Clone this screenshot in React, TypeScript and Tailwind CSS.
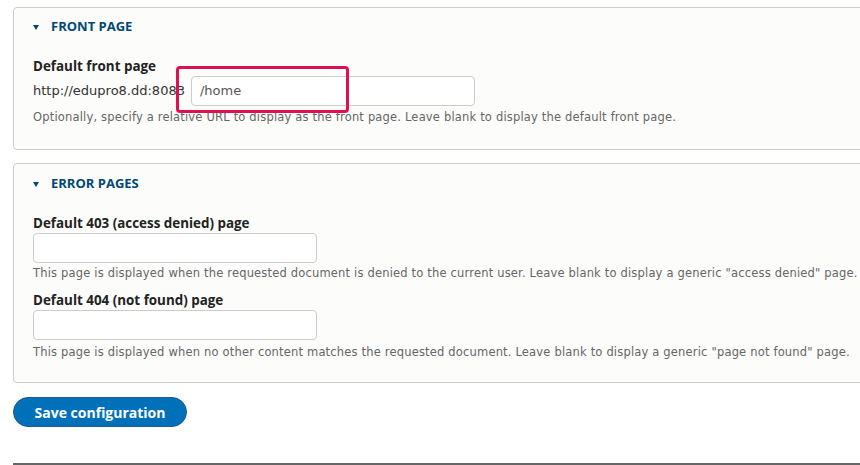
import React from "react";

const body = { fontFamily: '"DejaVu Sans", Verdana, sans-serif' };
const bold = { fontFamily: '"Open Sans", "Noto Sans", sans-serif' };

function Legend({ children }: { children: React.ReactNode }) {
  return (
    <div className="flex h-5 items-center pl-[19px]">
      <svg width="6" height="5" viewBox="0 0 6 5" className="mr-3" aria-hidden>
        <path d="M0 0h6L3 5z" fill="#004875" />
      </svg>
      <span className="text-[13px] font-bold uppercase text-[#004875]" style={bold}>
        {children}
      </span>
    </div>
  );
}

function Label({ children }: { children: React.ReactNode }) {
  return (
    <div className="h-[18px] text-[13.4px] font-bold leading-[18px] text-[#222]" style={bold}>
      {children}
    </div>
  );
}

function Description({ children }: { children: React.ReactNode }) {
  return (
    <div className="h-4 whitespace-nowrap text-[11.5px] leading-4 tracking-[0.18px] text-[#666]" style={body}>
      {children}
    </div>
  );
}

function TextInput({ value, className = "" }: { value?: string; className?: string }) {
  return (
    <div
      className={`flex h-[30px] w-[284px] items-center rounded-sm border border-[#ccc] bg-white px-2 text-[13px] text-[#555] ${className}`}
      style={body}
    >
      {value}
    </div>
  );
}

export default function App() {
  return (
    <div className="relative flex h-[465px] w-[860px] flex-col overflow-hidden bg-white pl-[13px] pt-[7px]">
      <section className="h-[143px] w-[900px] rounded-sm border border-[#ccc] bg-[#fcfcfa] pt-[9px]">
        <Legend>Front page</Legend>
        <div className="mt-5 pl-[19px]">
          <Label>Default front page</Label>
          <div className="mt-px flex items-center">
            <span className="text-[13px] text-[#333]" style={body}>
              http://edupro8.dd:8083
            </span>
            <TextInput value="/home" className="ml-[6px]" />
          </div>
          <div className="mt-[3px]">
            <Description>
              Optionally, specify a relative URL to display as the front page. Leave blank to display the default
              front page.
            </Description>
          </div>
        </div>
      </section>

      <section className="mt-[13px] h-[220px] w-[900px] rounded-sm border border-[#ccc] bg-[#fcfcfa] pt-[10px]">
        <Legend>Error pages</Legend>
        <div className="mt-5 pl-[19px]">
          <Label>Default 403 (access denied) page</Label>
          <TextInput className="mt-px" />
          <div className="mt-[2px]">
            <Description>
              This page is displayed when the requested document is denied to the current user. Leave blank to
              display a generic "access denied" page.
            </Description>
          </div>
          <div className="mt-[10px]">
            <Label>Default 404 (not found) page</Label>
          </div>
          <TextInput className="mt-px" />
          <div className="mt-[4px]">
            <Description>
              This page is displayed when no other content matches the requested document. Leave blank to display a
              generic "page not found" page.
            </Description>
          </div>
        </div>
      </section>

      <div className="mt-[14px]">
        <button
          className="flex h-[30px] w-[174px] items-center justify-center rounded-full border border-[#1e5c90] bg-[#0071b8] text-[14px] font-bold text-white"
          style={bold}
        >
          Save configuration
        </button>
      </div>

      <div className="mt-auto h-[2px] w-full bg-[#666]" />

      {/* annotation box */}
      <div className="absolute left-[176px] top-[66px] h-[47px] w-[173px] rounded-[4px] border-[3px] border-[#e0104f]" />
    </div>
  );
}
